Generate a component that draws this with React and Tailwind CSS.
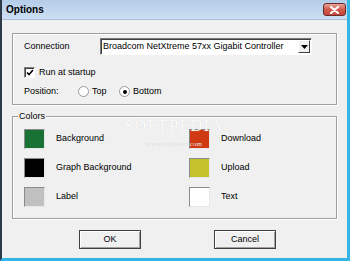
const leftColors = [
  { name: 'Background', color: '#177233' },
  { name: 'Graph Background', color: '#000000' },
  { name: 'Label', color: '#c0c0c0' },
];

const rightColors = [
  { name: 'Download', color: '#cf3a12' },
  { name: 'Upload', color: '#c4c12c' },
  { name: 'Text', color: '#ffffff' },
];

function Swatch({ name, color }) {
  return (
    <div className="flex items-center h-[20px]">
      <div
        className="w-[21px] h-[20px] border border-t-[#8a8a8a] border-l-[#8a8a8a] border-b-[#e8e8e8] border-r-[#e8e8e8]"
        style={{ backgroundColor: color }}
      />
      <span className="ml-[11px]">{name}</span>
    </div>
  );
}

function Radio({ label, checked }) {
  return (
    <div className="flex items-center">
      <div className="w-[11px] h-[11px] rounded-full bg-white border border-[#9a9a9a] flex items-center justify-center">
        {checked && <div className="w-[4px] h-[4px] rounded-full bg-black" />}
      </div>
      <span className="ml-[3px]">{label}</span>
    </div>
  );
}

function Button({ children }) {
  return (
    <button className="w-[62px] h-[19px] bg-[#f0f0f0] border border-[#404040] shadow-[inset_1px_1px_0_#ffffff,inset_-1px_-1px_0_#a0a0a0] text-black">
      {children}
    </button>
  );
}

export default function App() {
  return (
    <div className="w-[350px] h-[261px] flex flex-col bg-[#f0f0f0] border-l-2 border-l-[#2d3a48] border-r-[3px] border-r-[#33b5e5] border-b-[3px] border-b-[#33b5e5] font-['Liberation_Sans',Arial,sans-serif] text-[9px] text-black overflow-hidden relative">
      {/* title bar */}
      <div className="h-[20px] flex items-center justify-between pl-[4px] pr-[1px] bg-gradient-to-b from-[#b4cde9] to-[#cddff2] border-b border-[#a9bdd4]">
        <span className="font-bold text-[10px]">Options</span>
        <div className="w-[23px] h-[13px] rounded-[3px] border border-[#6b2b2b] bg-gradient-to-b from-[#e6a59a] via-[#cf5a4c] to-[#c7443a] flex items-center justify-center">
          <svg width="9" height="8" viewBox="0 0 9 8">
            <path d="M1 1L8 7M8 1L1 7" stroke="#ffffff" strokeWidth="2.2" strokeLinecap="round" />
          </svg>
        </div>
      </div>

      <div className="px-[10px]">
        {/* top group */}
        <div className="mt-[13px] h-[72px] border border-[#a0a0a0] shadow-[inset_1px_1px_0_#ffffff,1px_1px_0_#ffffff] pl-[11px] pt-[4px]">
          <div className="flex items-center h-[17px]">
            <span className="w-[76px]">Connection</span>
            <div className="w-[212px] h-[17px] bg-white border border-t-[#7a7a7a] border-l-[#7a7a7a] border-b-[#ffffff] border-r-[#ffffff] shadow-[inset_1px_1px_0_#404040] flex items-center">
              <span className="flex-1 pl-[2px] whitespace-nowrap">Broadcom NetXtreme 57xx Gigabit Controller</span>
              <div className="w-[12px] h-[13px] mr-px bg-[#f0f0f0] border border-t-white border-l-white border-b-[#404040] border-r-[#404040] flex items-center justify-center">
                <svg width="7" height="4" viewBox="0 0 7 4">
                  <path d="M0 0H7L3.5 4Z" fill="#000" />
                </svg>
              </div>
            </div>
          </div>
          <div className="flex items-center h-[13px] mt-[11px]">
            <div className="w-[11px] h-[11px] bg-white border border-t-[#808080] border-l-[#808080] border-b-white border-r-white shadow-[inset_1px_1px_0_#404040] flex items-center justify-center">
              <svg width="8" height="7" viewBox="0 0 8 7">
                <path d="M1 3.5L3 5.5L7 1" stroke="#000" strokeWidth="1.6" fill="none" />
              </svg>
            </div>
            <span className="ml-[4px]">Run at startup</span>
          </div>
          <div className="flex items-center h-[13px] mt-[6px]">
            <span className="w-[54px]">Position:</span>
            <div className="w-[41px]">
              <Radio label="Top" />
            </div>
            <Radio label="Bottom" checked />
          </div>
        </div>

        {/* colors group */}
        <div className="relative mt-[11px] h-[103px] border border-[#a0a0a0] shadow-[inset_1px_1px_0_#ffffff,1px_1px_0_#ffffff] pl-[11px] pt-[12px]">
          <span className="absolute -top-[7px] left-[5px] px-px bg-[#f0f0f0]">Colors</span>
          <div className="grid grid-cols-[165px_1fr]">
            <div className="flex flex-col gap-[9px]">
              {leftColors.map((c) => (
                <Swatch key={c.name} {...c} />
              ))}
            </div>
            <div className="flex flex-col gap-[9px]">
              {rightColors.map((c) => (
                <Swatch key={c.name} {...c} />
              ))}
            </div>
          </div>
        </div>

        {/* buttons */}
        <div className="mt-[11px] flex pl-[67px] gap-[73px]">
          <Button>OK</Button>
          <Button>Cancel</Button>
        </div>
      </div>

      {/* watermark */}
      <div className="absolute left-[122px] top-[118px] flex flex-col items-center pointer-events-none leading-none">
        <span className="font-['Liberation_Serif',serif] text-[16px] tracking-[1.5px] text-[#fbfbfb] [text-shadow:0_0_1px_#d6d6d6]">SOFTPEDIA</span>
        <span className="font-['Liberation_Serif',serif] text-[7px] text-[#e0e0e0] mt-[7px]">www.softpedia.com</span>
      </div>
    </div>
  );
}
